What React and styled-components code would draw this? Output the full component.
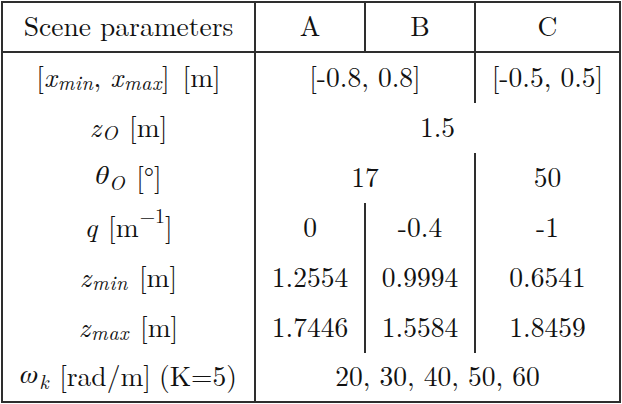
import React from "react";
import styled, { createGlobalStyle } from "styled-components";

const LINE = "#2e2e2e";
const SERIF = `"Latin Modern Roman", "Liberation Serif", serif`;
const GREEK = `FreeSerif, "Latin Modern Math", "Liberation Serif", serif`;

const Global = createGlobalStyle`
  html, body { margin: 0; padding: 0; background: #ffffff; }
  body {
    font-family: ${SERIF};
    color: #111111;
  }
`;

const Table = styled.div`
  margin: 1px 0 0 1px;
  width: 616px;
  border: 2px solid ${LINE};
  display: flex;
  flex-direction: column;
  font-family: ${SERIF};
`;

const Row = styled.div`
  display: grid;
  grid-template-columns: 251px 110px 110px 145px;
  height: ${(p) => p.$h}px;
  border-bottom: ${(p) => (p.$header ? `2px solid ${LINE}` : "none")};
`;

const Cell = styled.div`
  grid-column: span ${(p) => p.$span || 1};
  display: flex;
  align-items: center;
  justify-content: center;
  font-family: ${SERIF};
  font-size: 27.5px;
  line-height: 1;
  padding-bottom: 4px;
  border-left: ${(p) => (p.$rule ? `2px solid ${LINE}` : "none")};
  white-space: nowrap;
`;

const V = styled.span`
  font-style: italic;
`;

const Greek = styled.span`
  font-family: ${GREEK};
  font-style: italic;
  font-weight: 400;
  font-size: 0.96em;
`;

const Sub = styled.span`
  font-size: 0.74em;
  font-style: italic;
  letter-spacing: 0.5px;
  position: relative;
  top: 0.28em;
  margin-left: 1px;
`;

const Sup = styled.span`
  font-size: 0.72em;
  position: relative;
  top: -0.5em;
  margin-left: 1px;
`;

const Gap = styled.span`
  display: inline-block;
  width: ${(p) => p.$w}px;
`;

function Label({ children }) {
  return <Cell>{children}</Cell>;
}

export default function App() {
  return (
    <>
      <Global />
      <Table>
        <Row $h={48} $header>
          <Label>Scene parameters</Label>
          <Cell $rule>A</Cell>
          <Cell $rule>B</Cell>
          <Cell $rule>C</Cell>
        </Row>
        <Row $h={50}>
          <Label>
            [<V>x</V>
            <Sub>min</Sub>,<Gap $w={9} />
            <V>x</V>
            <Sub>max</Sub>]<Gap $w={13} />[m]
          </Label>
          <Cell $rule $span={2}>[-0.8, 0.8]</Cell>
          <Cell $rule>[-0.5, 0.5]</Cell>
        </Row>
        <Row $h={50}>
          <Label>
            <V>z</V>
            <Sub>O</Sub>
            <Gap $w={11} />[m]
          </Label>
          <Cell $rule $span={3}>1.5</Cell>
        </Row>
        <Row $h={50}>
          <Label>
            <Greek>θ</Greek>
            <Sub>O</Sub>
            <Gap $w={11} />[°]
          </Label>
          <Cell $rule $span={2}>17</Cell>
          <Cell $rule>50</Cell>
        </Row>
        <Row $h={50}>
          <Label>
            <V>q</V>
            <Gap $w={11} />[m<Sup>−1</Sup>]
          </Label>
          <Cell $rule>0</Cell>
          <Cell $rule>-0.4</Cell>
          <Cell $rule>-1</Cell>
        </Row>
        <Row $h={50}>
          <Label>
            <V>z</V>
            <Sub>min</Sub>
            <Gap $w={11} />[m]
          </Label>
          <Cell $rule>1.2554</Cell>
          <Cell $rule>0.9994</Cell>
          <Cell $rule>0.6541</Cell>
        </Row>
        <Row $h={50}>
          <Label>
            <V>z</V>
            <Sub>max</Sub>
            <Gap $w={11} />[m]
          </Label>
          <Cell $rule>1.7446</Cell>
          <Cell $rule>1.5584</Cell>
          <Cell $rule>1.8459</Cell>
        </Row>
        <Row $h={48}>
          <Label>
            <Greek>ω</Greek>
            <Sub>k</Sub>
            <Gap $w={10} />[rad/m]<Gap $w={8} />(K=5)
          </Label>
          <Cell $rule $span={3}>20, 30, 40, 50, 60</Cell>
        </Row>
      </Table>
    </>
  );
}
